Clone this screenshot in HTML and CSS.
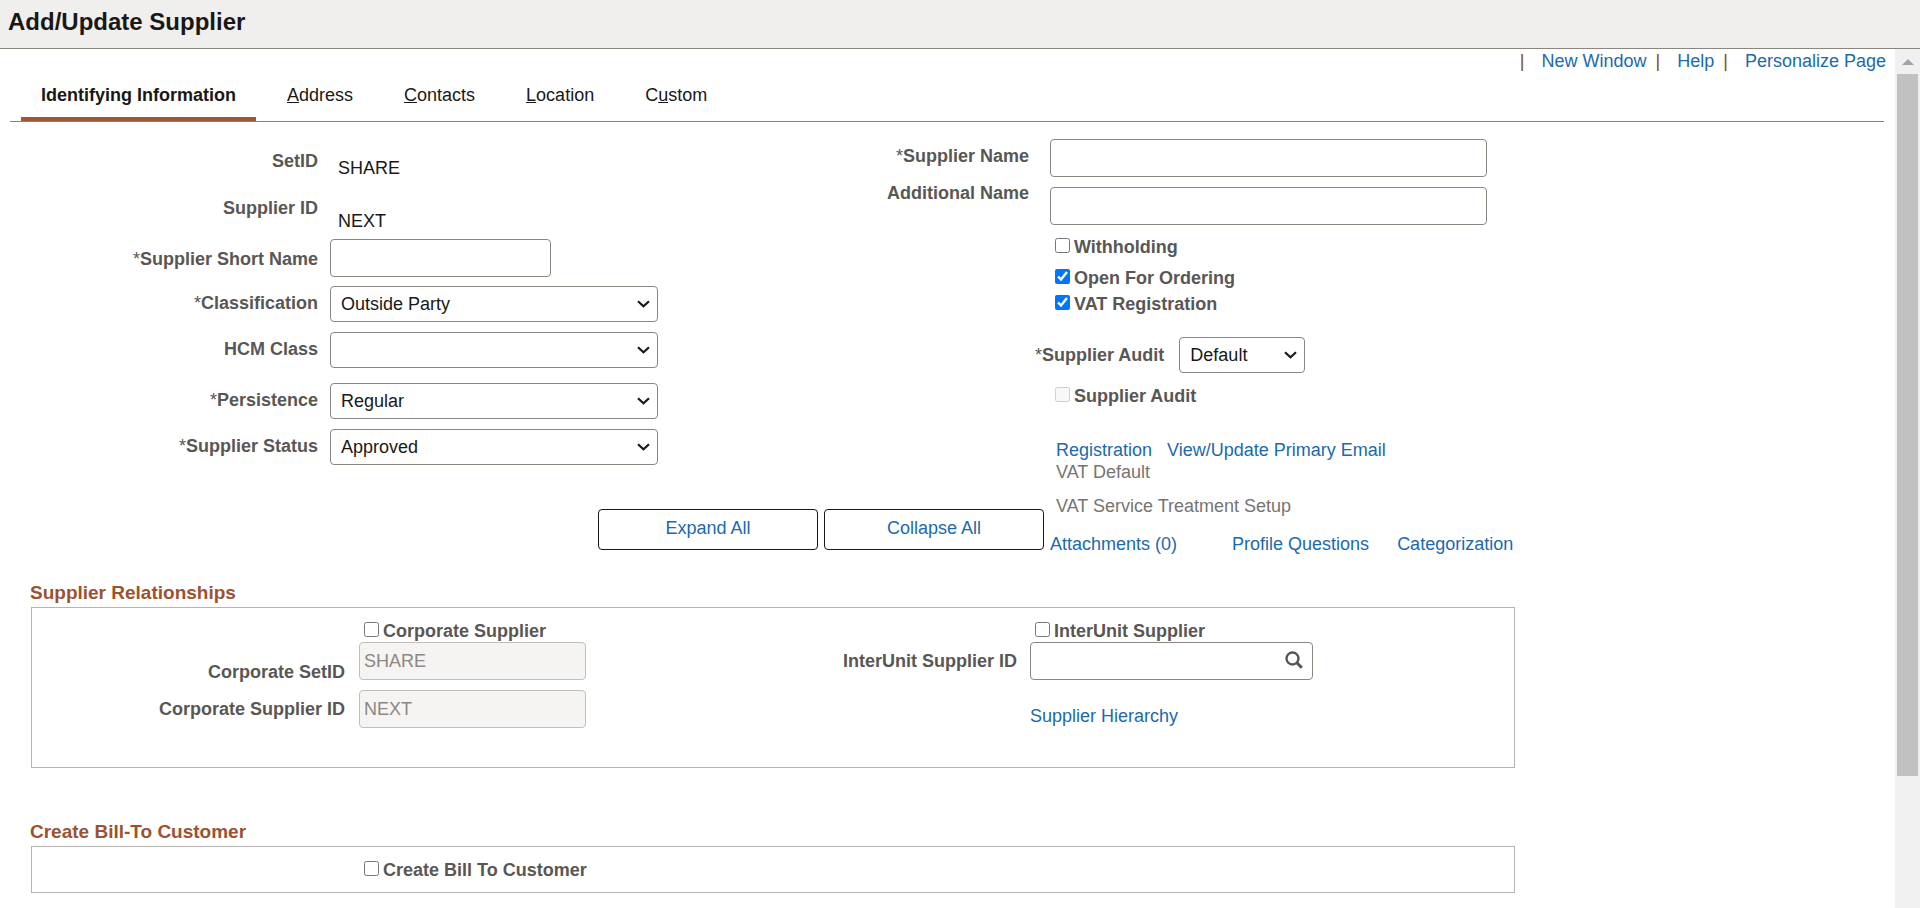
FILE: index.html
```html
<!DOCTYPE html>
<html lang="en">
<head>
<meta charset="utf-8">
<title>Add/Update Supplier</title>
<link rel="stylesheet" href="styles.css">
</head>
<body>
<header class="banner"><h1 class="banner-title">Add/Update Supplier</h1></header>
<div class="viewport">
  <main class="page">
    <nav class="page-links" aria-label="Page">
      <span>|</span><a href="#">New Window</a><span>|</span><a href="#">Help</a><span>|</span><a href="#">Personalize Page</a>
    </nav>
    <nav class="tabs" aria-label="Supplier">
      <a class="tab tab-active" href="#">Identifying Information</a>
      <a class="tab" href="#"><u>A</u>ddress</a>
      <a class="tab" href="#"><u>C</u>ontacts</a>
      <a class="tab" href="#"><u>L</u>ocation</a>
      <a class="tab" href="#">C<u>u</u>stom</a>
    </nav>
    <form class="sheet">
      <div class="details">
        <div class="details-left">
          <div class="details-top">
            <div class="identity">
              <span class="label">SetID</span><span class="value value-setid">SHARE</span>
              <span class="label">Supplier ID</span><span class="value value-id">NEXT</span>
              <label class="label label-short" for="short"><span class="req">*</span>Supplier Short Name</label>
              <input class="field field-short" id="short" type="text">
              <label class="label label-mid" for="class"><span class="req">*</span>Classification</label>
              <select class="field" id="class"><option>Outside Party</option></select>
              <label class="label label-mid" for="hcm">HCM Class</label>
              <select class="field" id="hcm"><option></option></select>
              <label class="label label-mid" for="persist"><span class="req">*</span>Persistence</label>
              <select class="field" id="persist"><option>Regular</option></select>
              <label class="label label-mid" for="status"><span class="req">*</span>Supplier Status</label>
              <select class="field" id="status"><option>Approved</option></select>
            </div>
            <div class="name-labels">
              <label class="label" for="name"><span class="req">*</span>Supplier Name</label>
              <label class="label" for="name2">Additional Name</label>
            </div>
          </div>
          <div class="actions">
            <button class="action" type="button">Expand All</button>
            <button class="action" type="button">Collapse All</button>
          </div>
        </div>
        <div class="details-right">
          <div class="names">
            <input class="field" id="name" type="text">
            <input class="field" id="name2" type="text">
          </div>
          <div class="flags">
            <label class="check"><input type="checkbox">Withholding</label>
            <div class="flag-pair">
              <label class="check"><input type="checkbox" checked>Open For Ordering</label>
              <label class="check"><input type="checkbox" checked>VAT Registration</label>
            </div>
          </div>
          <div class="audit">
            <label class="label" for="audit"><span class="req">*</span>Supplier Audit</label>
            <select class="field field-audit" id="audit"><option>Default</option></select>
          </div>
          <label class="check"><input type="checkbox" disabled>Supplier Audit</label>
          <div class="links">
            <div class="link-row"><a href="#">Registration</a><a href="#">View/Update Primary Email</a></div>
            <span class="muted">VAT Default</span>
            <span class="muted muted-service">VAT Service Treatment Setup</span>
          </div>
          <div class="more-links"><a class="attachments" href="#">Attachments (0)</a><a href="#">Profile Questions</a><a href="#">Categorization</a></div>
        </div>
      </div>

      <h2 class="group-title">Supplier Relationships</h2>
      <section class="group relations">
        <div class="relation">
          <label class="check check-corp"><input type="checkbox">Corporate Supplier</label>
          <label class="label label-corp-set" for="cset">Corporate SetID</label>
          <input class="field" id="cset" type="text" value="SHARE" disabled>
          <label class="label label-mid" for="cid">Corporate Supplier ID</label>
          <input class="field" id="cid" type="text" value="NEXT" disabled>
        </div>
        <div class="relation relation-inter">
          <label class="check"><input type="checkbox">InterUnit Supplier</label>
          <label class="label label-mid" for="iu">InterUnit Supplier ID</label>
          <div class="lookup">
            <input class="field" id="iu" type="text">
            <button class="lookup-button" type="button" aria-label="Look up">
              <svg width="18" height="18" viewBox="0 0 18 18" fill="none" stroke="#555" aria-hidden="true"><circle cx="7.5" cy="7.5" r="6" stroke-width="2.4"/><path d="M11.8 11.8L16.8 16.8" stroke-width="3"/></svg>
            </button>
          </div>
          <a class="hierarchy" href="#">Supplier Hierarchy</a>
        </div>
      </section>

      <h2 class="group-title group-title-next">Create Bill-To Customer</h2>
      <section class="group">
        <label class="check check-bill"><input type="checkbox">Create Bill To Customer</label>
      </section>
    </form>
  </main>
  <div class="scrollbar" aria-hidden="true"><span class="scroll-arrow"></span><span class="scroll-thumb"></span></div>
</div>
</body>
</html>
```
FILE: styles.css
```css
* { box-sizing: border-box; }
body {
  margin: 0;
  height: 100vh;
  overflow: hidden;
  display: flex;
  flex-direction: column;
  background: #fff;
  color: #1a1816;
  font: 18px/20px "Liberation Sans", Arial, sans-serif;
}
a { color: #1b69b0; text-decoration: none; white-space: nowrap; }

.banner {
  flex: none;
  padding: 8px 8px 12px;
  background: #f0efed;
  border-bottom: 1px solid #8b8580;
}
.banner-title { margin: 0; font-size: 24px; line-height: 28px; }

.viewport { flex: 1; min-height: 0; display: flex; }
.page { flex: 1; min-width: 0; overflow: hidden; }
.page-links {
  display: flex;
  justify-content: flex-end;
  padding: 2px 9px 0 0;
  color: #7a4a3a;
}
.page-links span { margin: 0 17px 0 9px; }

.tabs {
  display: flex;
  gap: 8px;
  margin: 0 11px 0 10px;
  padding: 0 11px;
  border-bottom: 1px solid #85827e;
}
.tab {
  padding: 14px 20px 12px;
  border-bottom: 4px solid transparent;
  color: #1a1816;
}
.tab + .tab { padding-left: 23px; }
.tab-active { border-bottom-color: #a05535; font-weight: bold; }

.sheet { padding-left: 30px; max-width: 1515px; }
.label { color: #595755; font-weight: bold; text-align: right; white-space: nowrap; }
.label-mid { align-self: center; }
.req { font-weight: normal; }

.field {
  width: 100%;
  height: 38px;
  padding: 0 4px;
  border: 1px solid #8b8580;
  border-radius: 4px;
  background: #fff;
  color: #1a1816;
  font: inherit;
}
select.field {
  height: 36px;
  padding: 0 26px 0 10px;
  appearance: none;
  background: #fff url("data:image/svg+xml,%3Csvg xmlns='http://www.w3.org/2000/svg' width='13' height='8' viewBox='0 0 13 8'%3E%3Cpath d='M1 1.2L6.5 6.2L12 1.2' fill='none' stroke='%231a1816' stroke-width='2.2'/%3E%3C/svg%3E") no-repeat right 7px center;
}
.field:disabled { background: #f5f4f2; border-color: #c2bfba; color: #8b8885; }

.check {
  display: flex;
  align-items: flex-start;
  gap: 4px;
  padding-left: 5px;
  color: #595755;
  font-weight: bold;
}
.check input { width: 15px; height: 15px; margin: 1px 0 0; }

.details { display: grid; grid-template-columns: 1014px 1fr; column-gap: 6px; }
.details-top { display: flex; justify-content: space-between; }
.identity {
  display: grid;
  grid-template-columns: 288px 328px;
  grid-template-rows: 47px 41px 47px 46px 51px 46px 37px;
  column-gap: 12px;
  align-items: start;
  padding-top: 29px;
}
.identity .label-mid { align-self: start; padding-top: 7px; }
.label-short { padding-top: 10px; }
.value { padding-left: 8px; }
.value-setid { padding-top: 7px; }
.value-id { padding-top: 13px; }
.field-short { width: 221px; }
.name-labels { display: flex; flex-direction: column; gap: 17px; padding: 24px 15px 0 0; }

.actions { display: flex; justify-content: flex-end; gap: 6px; margin-top: 43px; }
.action {
  width: 220px;
  height: 41px;
  padding: 0 0 4px;
  border: 1px solid #1a1816;
  border-radius: 4px;
  background: #fff;
  color: #1b69b0;
  font: inherit;
}

.details-right { padding-top: 17px; }
.names { display: grid; gap: 10px; max-width: 437px; }
.flags { display: grid; gap: 11px; margin-top: 12px; }
.flag-pair { display: grid; gap: 6px; }
.audit {
  display: flex;
  align-items: center;
  gap: 15px;
  margin: 23px 0 13px -15px;
}
.field-audit { width: 126px; }
.links { display: flex; flex-direction: column; gap: 2px; margin-top: 34px; padding-left: 6px; }
.link-row { display: flex; gap: 15px; }
.muted { color: #767472; }
.muted-service { margin-top: 12px; }
.more-links { display: flex; gap: 28px; margin-top: 18px; }
.attachments { margin-right: 27px; }

.group-title { margin: 27px 0 2px; color: #9c5230; font-size: 19px; line-height: 24px; }
.group-title-next { margin-top: 52px; }
.group { margin-left: 1px; padding: 13px 0 12px; border: 1px solid #b5b4b0; }
.relations { display: flex; align-items: flex-start; padding-bottom: 39px; }
.relation {
  display: grid;
  grid-template-columns: 313px 227px;
  column-gap: 14px;
  row-gap: 8px;
}
.relation .check { grid-column: 2; margin-bottom: -7px; }
.label-corp-set { padding-top: 20px; }
.relation-inter { grid-template-columns: 431px 283px; column-gap: 13px; }
.lookup { position: relative; }
.lookup-button {
  position: absolute;
  top: 9px;
  right: 10px;
  display: flex;
  padding: 0;
  border: 0;
  background: none;
}
.hierarchy { grid-column: 2; padding-top: 18px; }
.check-bill { padding-left: 332px; }

.scrollbar {
  flex: none;
  width: 25px;
  display: flex;
  flex-direction: column;
  align-items: center;
  padding: 10px 2px 0;
  background: #f0f0f0;
}
.scroll-arrow { border: 6px solid transparent; border-top: 0; border-bottom-color: #a3a3a3; }
.scroll-thumb { width: 21px; height: 82.7%; margin-top: 9px; background: #c1c1c1; }
```
